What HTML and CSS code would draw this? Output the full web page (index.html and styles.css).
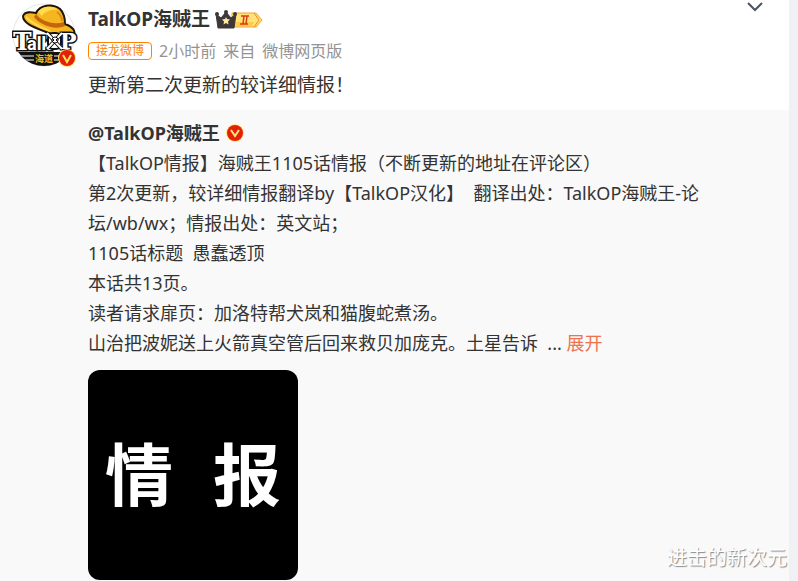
FILE: index.html
```html
<!DOCTYPE html>
<html lang="zh-CN">
<head>
    <meta charset="UTF-8">
    <meta name="viewport" content="width=device-width, initial-scale=1.0">
    <title>TalkOP海贼王</title>
    <link rel="stylesheet" href="styles.css">
</head>
<body>
    <article class="card">
        <header class="post">
            <a class="avatar" href="#" aria-label="TalkOP海贼王">
                <svg width="66" height="66" viewBox="0 0 66 66">
                    <defs>
                        <clipPath id="round"><circle cx="32" cy="33" r="31"/></clipPath>
                    </defs>
                    <circle cx="32" cy="33" r="31" fill="#fff" stroke="#e6e6e6"/>
                    <g clip-path="url(#round)">
                        <path d="M0 50h66v16H0z" fill="#111"/>
                        <path d="M4 54h18M42 54h6M6 58h16M42 58h6" stroke="#fff" stroke-width="1"/>
                    </g>
                    <!-- straw hat -->
                    <path d="M11 14C13 9 19 10 24 11C28 3 40 1 48 7C52 11 53 17 53 22C60 24 65 30 61 33C56 36 43 34 34 30C24 26 11 22 11 14z" fill="#f5b61f" stroke="#1c1508" stroke-width="2"/>
                    <path d="M26 10C30 4 41 3 46 8C43 7 33 8 30 14z" fill="#ffdc4e"/>
                    <path d="M24 12C28 18 41 24 52 20L53 24C42 29 27 22 22 15z" fill="#c4650e"/>
                    <path d="M14 15C20 22 31 26 38 29M43 31C50 33 55 33 59 31" stroke="#ffd950" stroke-width="2" fill="none"/>
                    <path d="M45 10C49 13 50 16 50 19" stroke="#d98a17" stroke-width="2" fill="none"/>
                    <!-- lettering -->
                    <g class="logo-text">
                        <text x="1" y="48" font-size="25">T</text>
                        <text class="logo-small" x="15" y="48" font-size="18">alk</text>
                        <text x="48" y="47" font-size="22">P</text>
                    </g>
                    <rect x="36" y="31" width="13" height="16" rx="5" fill="#fff" stroke="#111" stroke-width="2"/>
                    <path d="M36 32l13 14M49 32L36 46" stroke="#111" stroke-width="4"/>
                    <path d="M35 31l15 16M50 31L35 47" stroke="#fff" stroke-width="2"/>
                    <circle cx="43" cy="38" r="3" fill="#fff" stroke="#111"/>
                    <path d="M41 38h1M44 38h1" stroke="#111" stroke-width="2"/>
                    <text class="logo-sub" x="23" y="60">海道</text>
                    <circle cx="55" cy="56" r="9" fill="#ffe55c"/>
                    <circle cx="55" cy="56" r="8" fill="#e2200c"/>
                    <path d="M51 53l4 7 4-7" fill="none" stroke="#ffe55c" stroke-width="2"/>
                </svg>
            </a>
            <div class="post-main">
                <div class="name-row">
                    <a class="name" href="#">TalkOP海贼王</a>
                    <svg class="level" width="49" height="19" viewBox="0 0 49 19">
                        <path d="M17 3h24l6 7-6 7H17z" fill="#ffe27a" stroke="#f7a02c"/>
                        <path d="M39 3l5 7-5 7" fill="none" stroke="#f08a1e" stroke-width="1"/>
                        <path d="M18 12h21l-2 4H18z" fill="#ffc94a"/>
                        <path d="M26 6h8M25 14h8M29 6l-1 8M32 6l-1 8" stroke="#dc3b18" stroke-width="1.500" fill="none"/>
                        <path d="M1 4l5 4 5-6 5 6 5-4-2 14H3z" fill="#3d3737" stroke="#3d3737"/>
                        <circle cx="2" cy="4" r="2" fill="#3d3737"/>
                        <circle cx="11" cy="2" r="2" fill="#3d3737"/>
                        <circle cx="20" cy="4" r="2" fill="#3d3737"/>
                        <path d="M11 7l1 2 3 .5-2 2 .5 3-2.500-1.500-2.500 1.500.5-3-2-2 3-.5z" fill="#ffe9a0"/>
                    </svg>
                </div>
                <div class="meta">
                    <span class="tag">接龙微博</span>
                    <a href="#">2小时前</a>
                    <span>来自</span>
                    <a href="#">微博网页版</a>
                </div>
                <p class="post-text">更新第二次更新的较详细情报！</p>
            </div>
            <button class="more" type="button" aria-label="更多">
                <svg width="16" height="10" viewBox="0 0 16 10">
                    <path d="M1 1l7 7 7-7" fill="none" stroke="#4c5360" stroke-width="2"/>
                </svg>
            </button>
        </header>

        <section class="repost">
            <div class="repost-name">
                <a class="name" href="#">@TalkOP海贼王</a>
                <svg width="20" height="20" viewBox="0 0 20 20">
                    <circle cx="10" cy="10" r="9" fill="#ffe873"/>
                    <circle cx="10" cy="10" r="8" fill="#e2200c"/>
                    <path d="M6 7l4 6 4-6" fill="none" stroke="#ffe873" stroke-width="2"/>
                </svg>
            </div>
            <p class="repost-text">【TalkOP情报】海贼王1105话情报（不断更新的地址在评论区）<br>
                第2次更新，较详细情报翻译by【TalkOP汉化】&nbsp; 翻译出处：TalkOP海贼王-论坛/wb/wx；情报出处：英文站；<br>
                1105话标题&nbsp; 愚蠢透顶<br>
                本话共13页。<br>
                读者请求扉页：加洛特帮犬岚和猫腹蛇煮汤。<br>
                山治把波妮送上火箭真空管后回来救贝加庞克。土星告诉&nbsp; ... <a class="expand" href="#">展开</a></p>
            <a class="picture" href="#"><span>情</span><span>报</span></a>
        </section>
        <div class="watermark">进击的新次元</div>
    </article>
</body>
</html>
```

FILE: styles.css
```css
* {
    box-sizing: border-box;
}

body {
    margin: 0;
    background-color: #f0f1f4;
    color: #333;
    font-family: "Noto Sans", "Noto Sans CJK SC", sans-serif;
    text-spacing-trim: space-all;
}

a {
    color: inherit;
    text-decoration: none;
}

p {
    margin: 0;
}

.card {
    position: relative;
    display: flex;
    flex-direction: column;
    min-height: 100vh;
    margin-right: 9px;
    background-color: #fff;
}

.post {
    display: flex;
    align-items: flex-start;
    padding: 2px 26px 6px 12px;
}

.avatar {
    width: 76px;
    flex: none;
}

.avatar svg {
    display: block;
}

.logo-text {
    font-family: "DejaVu Serif", serif;
    font-weight: bold;
    fill: #fff;
    stroke: #111;
    stroke-width: 3px;
    paint-order: stroke;
}

.logo-small {
    font-family: Roboto, sans-serif;
}

.logo-sub {
    font-size: 9px;
    font-weight: bold;
    fill: #f2b71f;
}

.post-main {
    flex: 1;
}

.name-row,
.repost-name {
    display: flex;
    align-items: center;
    gap: 5px;
}

.name-row {
    font-size: 19px;
    line-height: 34px;
}

.name {
    font-weight: bold;
}

.meta {
    display: flex;
    align-items: center;
    gap: 7px;
    color: #939393;
    font-size: 16px;
    line-height: 30px;
}

.tag {
    padding: 0 7px;
    border: 1px solid #ff8200;
    border-radius: 4px;
    color: #ff8200;
    font-size: 12px;
    line-height: 16px;
}

.post-text {
    font-size: 19px;
    line-height: 38px;
}

.more {
    padding: 0;
    border: 0;
    background: none;
    cursor: pointer;
    line-height: 0;
}

.repost {
    flex: 1;
    padding: 8px 84px 0 88px;
    background-color: #f9f9f9;
}

.repost-name {
    font-size: 18px;
    line-height: 30px;
}

.repost-text {
    font-size: 18px;
    line-height: 30px;
}

.expand {
    color: #eb7350;
}

.picture {
    display: flex;
    align-items: center;
    justify-content: center;
    gap: 40px;
    width: 210px;
    aspect-ratio: 1;
    margin-top: 12px;
    padding-bottom: 6px;
    border-radius: 12px;
    background-color: #000;
    color: #fff;
    font-family: "Noto Sans CJK SC", sans-serif;
    font-size: 68px;
    font-weight: bold;
    line-height: 1;
}

.watermark {
    position: absolute;
    right: 2px;
    bottom: 8px;
    color: #fff;
    font-size: 20px;
    line-height: 30px;
    text-shadow: 1px 1px 1px #888;
}
```
